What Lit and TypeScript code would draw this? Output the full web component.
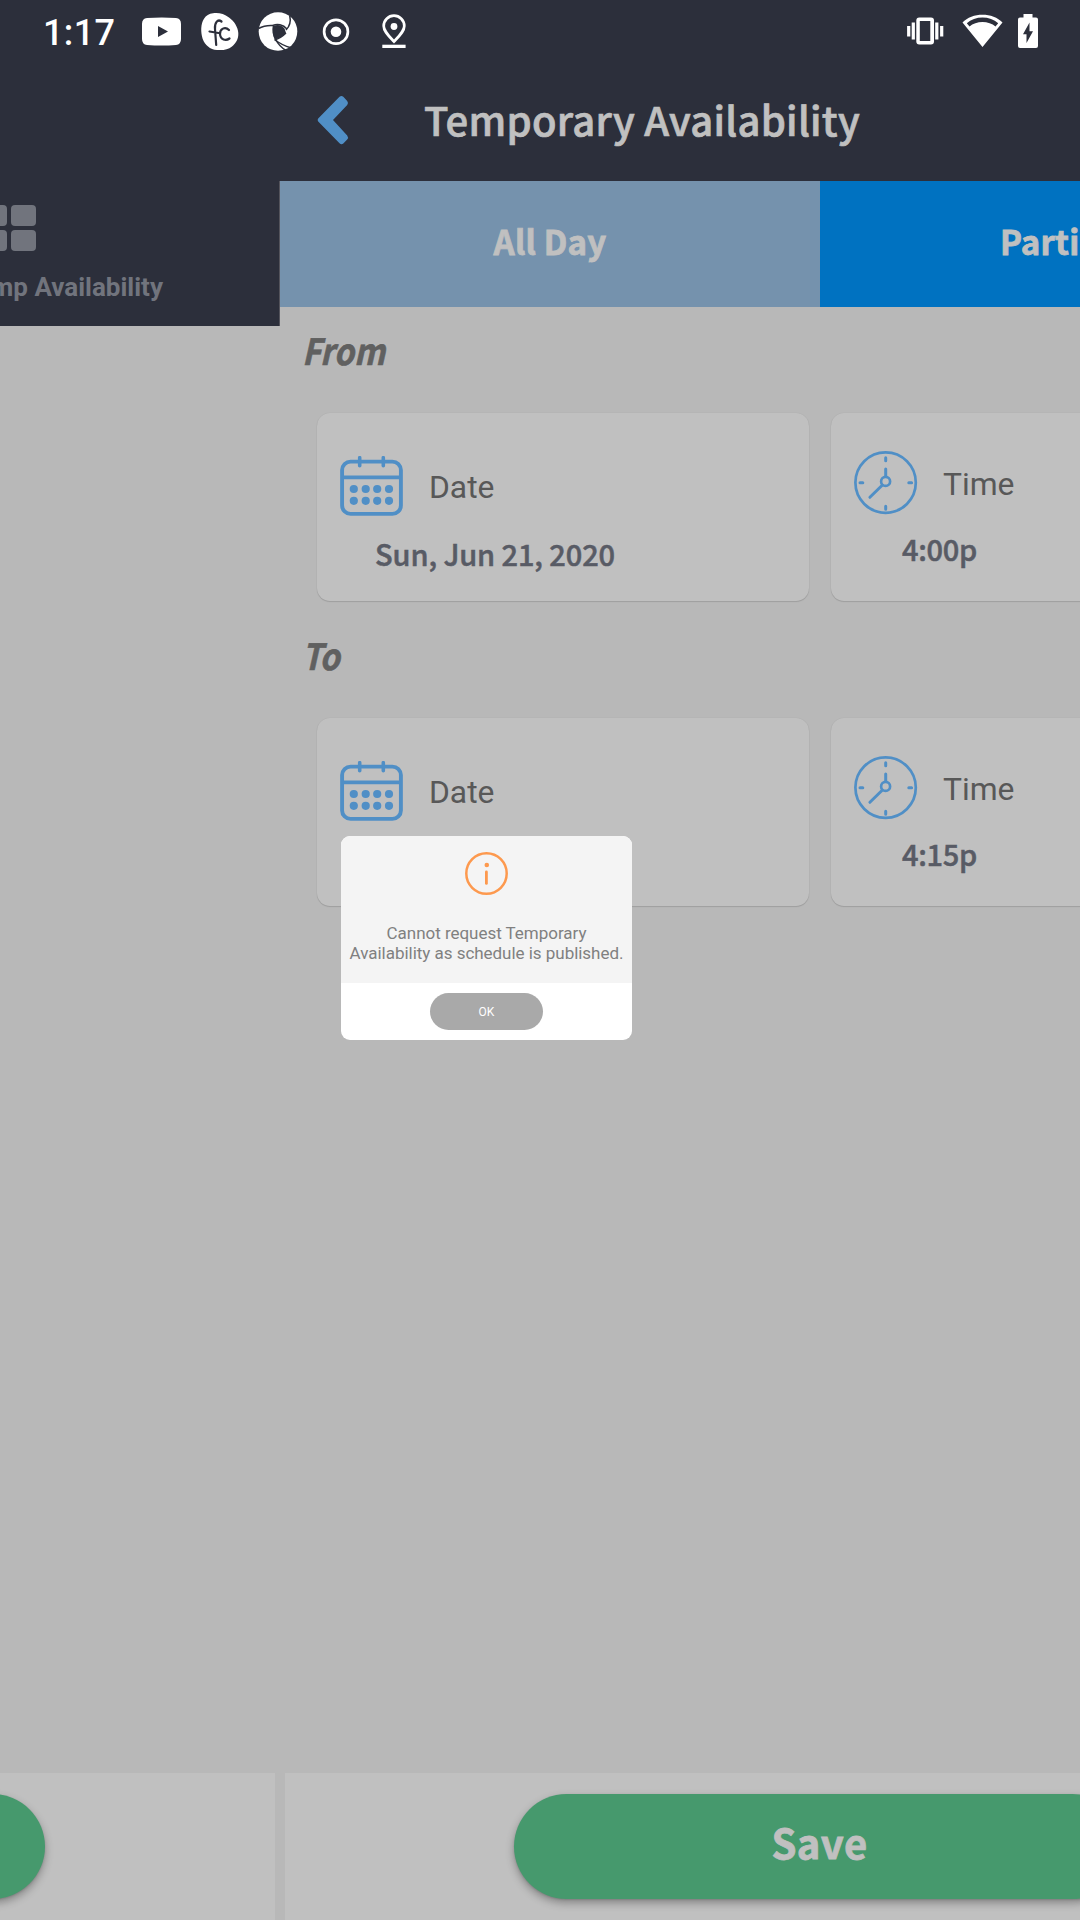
import { LitElement, html, css, svg, nothing } from "lit";
import { customElement, property } from "lit/decorators.js";

const calendarIcon = html`<svg width="64" height="62" viewBox="0 0 64 62" fill="none" stroke="#508fc6">
  <rect x="2.1" y="5.6" width="58.8" height="52.3" rx="8.5" stroke-width="3.9"></rect>
  <path d="M2 21.3H61" stroke-width="3.7"></path>
  <path d="M19.7 1.7V9.7M43.3 1.7V9.7" stroke-width="3.6" stroke-linecap="round"></path>
  <g fill="#508fc6" stroke="none">
    ${[13.8, 25.7, 37.2, 49].map((x) => svg`<circle cx=${x} cy="33" r="4.1"></circle><circle cx=${x} cy="44.8" r="4.1"></circle>`)}
  </g>
</svg>`;

const clockIcon = html`<svg width="64" height="64" viewBox="0 0 64 64" fill="none" stroke="#508fc6" stroke-linecap="round">
  <circle cx="31.6" cy="31.6" r="30.2" stroke-width="2.7"></circle>
  <path d="M31.7 6.7V9.7M31.7 55.3V58.3M6 31.8H8.8M54.8 31.8H57.6" stroke-width="3"></path>
  <path d="M31.7 18V25.4M28.2 34.2L15.9 46.3" stroke-width="3"></path>
  <circle cx="31.6" cy="30.4" r="4.5" stroke-width="2.7"></circle>
</svg>`;

@customElement("status-bar")
class StatusBar extends LitElement {
  static styles = css`
    :host { display: flex; height: 65px; justify-content: space-between; }
    .time { width: 98px; padding-left: 43px; font: 500 36px/66px Roboto, sans-serif; letter-spacing: 0.4px; color: #fff; }
    .left { display: flex; }
    svg { display: block; }
  `;
  render() {
    return html`
      <div class="left">
        <div class="time">1:17</div>
        <svg width="280" height="65" viewBox="141 0 280 65" fill="#fff">
          <path d="M147 18Q162 17 176 18Q181 18.500 181 24V39Q181 44.500 176 45Q162 46 147 45Q142 44.500 142 39V24Q142 18.500 147 18ZM158 26V37L168 31.500Z"></path>
          <path d="M213 13.300C219 12.500 224 14 229 17.500C234 21 238 27 238.300 33C238.600 39 236 43 232 46.500C228 50 223 50.300 217 50C210 49.500 205 45 202.700 39C200.500 32 200.700 24 204 18.800C206 15.500 209 13.800 213 13.300Z"></path>
          <path d="M221.500 21.500C217.500 18.500 214.500 23 215 29L216.200 45M209.500 31.500L218.500 33M229 30C225 26 219.800 29 220 34C220.300 40 226 41 229.500 38.500" fill="none" stroke="#2c2f3b" stroke-width="2.200" stroke-linecap="round"></path>
          <circle cx="278" cy="31.500" r="19.300"></circle>
          <g stroke="#2c2f3b" stroke-width="1.500" fill="none">
            <path d="M258.500 28.500C262 26.500 267 25 273.500 25.500"></path>
            <path d="M273 25.500C277 23.500 283 24.500 287 29"></path>
            <path d="M286 30C290 26 291 21 289.700 15.500"></path>
            <path d="M286 33C282 37 278 39 274.500 40"></path>
            <path d="M273.500 25.500C272.500 31 273.500 36 276 40C278.500 45 282 48 286 50.500"></path>
            <path d="M275 40C280 43.500 284 46 290 47.500"></path>
          </g>
          <path d="M273.500 26C278 24 282 25.500 284.500 28.500L286 33C283 36.500 279 38.500 275 39.500C272.500 35 272.300 30 273.500 26Z" fill="#2c2f3b"></path>
          <circle cx="336" cy="31.700" r="11.900" fill="none" stroke="#fff" stroke-width="2.700"></circle>
          <circle cx="336" cy="31.700" r="5.300"></circle>
          <path d="M394 41.500C388 35 383.700 31 383.700 26A10.300 10.300 0 0 1 404.300 26C404.300 31 400 35 394 41.500Z" fill="none" stroke="#fff" stroke-width="2.700"></path>
          <circle cx="394" cy="26.500" r="3.400"></circle>
          <path d="M382.300 44.700H405.600V48H382.300Z"></path>
        </svg>
      </div>
      <svg width="180" height="65" viewBox="900 0 180 65" fill="#fff">
        <path d="M919.300 17.500H931Q934 17.500 934 20.500V41.500Q934 44.500 931 44.500H919.300Q916.300 44.500 916.300 41.500V20.500Q916.300 17.500 919.300 17.500ZM919.800 21V41H930.300V21Z" fill-rule="evenodd"></path>
        <path d="M913.300 22.500V39.500M908.700 26V36.500M936.800 22.500V39.500M941.700 26V36.500" stroke="#fff" stroke-width="3.200"></path>
        <path d="M962.500 22.500C972 12 993 12 1002.500 22.500L982.500 47ZM966.800 23.300L969.500 26.500C976 20.500 989 20.500 995.500 26.500L998.200 23.300C990 15.500 975 15.500 966.800 23.300Z" fill-rule="evenodd"></path>
        <path d="M1023.500 14H1032.500V17.500H1036Q1038 17.500 1038 19.500V46Q1038 48 1036 48H1020Q1018 48 1018 46V19.500Q1018 17.500 1020 17.500H1023.500Z"></path>
        <path d="M1029.500 22.500L1023 34.300H1026.500V43L1033 31.200H1029.500Z" fill="#2c2f3b"></path>
      </svg>`;
  }
}

@customElement("picker-card")
class PickerCard extends LitElement {
  @property() kind = "date";
  @property() label = "";
  @property() value = "";
  static styles = css`
    :host { display: block; flex: none; box-sizing: border-box; width: 492px; height: 188px; background: #c0c0c0; border-radius: 13px; box-shadow: 0 0 1px rgba(0, 0, 0, 0.12), 0 1px 1px rgba(0, 0, 0, 0.13); }
    .head { display: flex; align-items: center; gap: 25px; padding: 42px 0 0 23px; height: 64px; font: 400 31.800px/64px Roboto, sans-serif; color: #585858; }
    .time .head { padding-top: 38px; }
    .time .name { padding-top: 1px; }
    .value { padding: 13px 0 0 58px; font: 500 29px/42px "Noto Sans CJK SC", sans-serif; letter-spacing: -0.1px; color: #585b65; -webkit-text-stroke: 0.5px #585b65; height: 42px; }
    .time .value { padding: 12px 0 0 71px; letter-spacing: -0.3px; }
  `;
  render() {
    return html`<div class=${this.kind}>
      <div class="head">${this.kind === "date" ? calendarIcon : clockIcon}<span class="name">${this.label}</span></div>
      <div class="value">${this.value || nothing}</div>
    </div>`;
  }
}

@customElement("app-root")
class AppRoot extends LitElement {
  static styles = css`
    :host { display: block; position: relative; width: 1080px; height: 1920px; overflow: hidden; background: #b8b8b8; }
    .screen { display: flex; flex-direction: column; height: 1920px; }
    .top { height: 181px; flex: none; background: #2c2f3b; }
    .header { display: flex; align-items: center; height: 108px; padding-left: 316px; }
    .header svg { display: block; flex: none; margin-top: 2px; }
    .title { margin-left: 74px; font: 500 40px/60px "Noto Sans CJK SC", sans-serif; letter-spacing: 0.26px; color: #c0c0c0; -webkit-text-stroke: 0.7px #c0c0c0; white-space: nowrap; }
    .pages { display: flex; flex: 1; width: 1360px; min-height: 0; }
    .previous { display: flex; flex-direction: column; width: 280px; flex: none; overflow: hidden; }
    .menu { box-sizing: border-box; height: 145px; background: #2c2f3b; border-right: 1px solid #54545c; padding-top: 24px; }
    .grid { display: grid; grid-template-columns: 25px 25px; gap: 4px; margin-left: -18px; }
    .tile { height: 21px; border-radius: 4px; background: #71747d; }
    .item { width: 163px; height: 36px; margin-top: 18px; display: flex; justify-content: flex-end; font: 700 26px/36px Roboto, sans-serif; color: #71747d; white-space: nowrap; }
    .spacer { flex: 1; }
    .footer { box-sizing: border-box; height: 147px; flex: none; background: #c0c0c0; padding-top: 21px; display: flex; }
    .previous .footer { margin-right: 5px; }
    .page .footer { margin-left: 5px; padding-left: 229px; }
    .button { width: 611px; height: 105px; flex: none; border-radius: 53px; background: #46996d; box-shadow: 0 4px 8px rgba(0, 0, 0, 0.3), 0 1px 2px rgba(0, 0, 0, 0.12); font: 700 40px/97px "Noto Sans CJK SC", sans-serif; text-align: center; color: #c0c0c0; -webkit-text-stroke: 0.8px #c0c0c0; letter-spacing: 0.4px; }
    .previous .button { margin-left: -566px; }
    .page { display: flex; flex-direction: column; width: 1080px; flex: none; }
    .tabs { display: flex; height: 126px; flex: none; }
    .tab { width: 540px; font: 700 33px/121px "Noto Sans CJK SC", sans-serif; text-align: center; color: #c0c0c0; background: #7592ad; -webkit-text-stroke: 0.8px #c0c0c0; letter-spacing: 0.2px; }
    .active { background: #0072c1; }
    .section { height: 305px; flex: none; }
    .caption { padding: 16px 0 0 22px; height: 52px; font: italic 700 36px/52px "Noto Sans CJK SC", sans-serif; color: #606060; -webkit-text-stroke: 0.6px #606060; transform: scaleX(0.895); transform-origin: 22px 0; }
    .cards { display: flex; gap: 22px; padding: 38px 0 0 37px; }
    .dialog { position: absolute; left: 341px; top: 836px; width: 291px; height: 204px; border-radius: 9px; overflow: hidden; background: #fff; display: flex; flex-direction: column; align-items: center; font-family: Roboto, sans-serif; }
    .message { box-sizing: border-box; width: 291px; height: 147px; background: #f4f4f4; padding-top: 16px; display: flex; flex-direction: column; align-items: center; color: #808080; font-size: 17px; line-height: 20px; text-align: center; white-space: nowrap; letter-spacing: -0.03px; }
    .message svg { display: block; }
    .text { margin-top: 28px; }
    .ok { margin-top: 10px; width: 113px; height: 37px; border-radius: 18.500px; background: #a9a9a9; color: #fff; font-size: 12px; line-height: 38px; text-align: center; }
  `;

  private section(caption: string, date: string, time: string) {
    return html`<div class="section">
      <div class="caption">${caption}</div>
      <div class="cards">
        <picker-card kind="date" label="Date" .value=${date}></picker-card>
        <picker-card kind="time" label="Time" .value=${time}></picker-card>
      </div>
    </div>`;
  }

  render() {
    return html`
      <div class="screen">
        <div class="top">
          <status-bar></status-bar>
          <div class="header">
            <svg width="34" height="52" viewBox="0 0 34 52"><path d="M23.500 2.800Q25.500 1 27.300 2.800L31.200 7Q32.800 9 31.200 11L17 26L31.200 41.500Q32.800 43.500 31.200 45.500L27.300 49.500Q25.500 51 23.500 49.200L2.200 27.500Q1 26 2.200 24.500Z" fill="#508fc6"></path></svg>
            <div class="title">Temporary Availability</div>
          </div>
        </div>
        <div class="pages">
          <div class="previous">
            <div class="menu">
              <div class="grid">${[0, 1, 2, 3].map(() => html`<div class="tile"></div>`)}</div>
              <div class="item">Temp Availability</div>
            </div>
            <div class="spacer"></div>
            <div class="footer"><div class="button"></div></div>
          </div>
          <div class="page">
            <div class="tabs">
              <div class="tab">All Day</div>
              <div class="tab active">Partial Day</div>
            </div>
            ${this.section("From", "Sun, Jun 21, 2020", "4:00p")}
            ${this.section("To", "", "4:15p")}
            <div class="spacer"></div>
            <div class="footer"><div class="button">Save</div></div>
          </div>
        </div>
      </div>
      <div class="dialog">
        <div class="message">
          <svg width="43" height="43" viewBox="0 0 43 43" fill="#fd994e"><circle cx="21.500" cy="21.500" r="20.200" fill="none" stroke="#fd994e" stroke-width="2.500"></circle><circle cx="21.800" cy="13" r="2.300"></circle><rect x="20" y="18.600" width="2.800" height="14.200" rx="1.400"></rect></svg>
          <div class="text">Cannot request Temporary<br />Availability as schedule is published.</div>
        </div>
        <div class="ok">OK</div>
      </div>`;
  }
}
